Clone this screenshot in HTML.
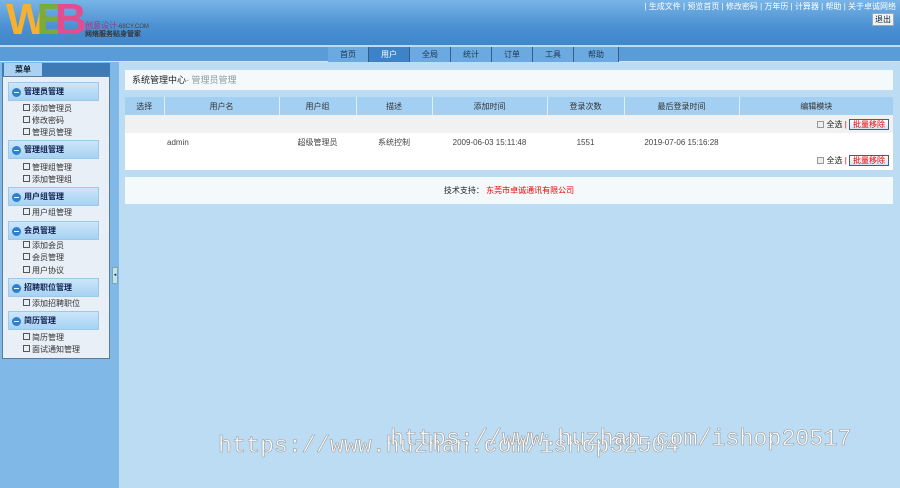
<!DOCTYPE html>
<html><head><meta charset="utf-8"><style>
*{margin:0;padding:0;box-sizing:border-box}
body{width:900px;height:488px;overflow:hidden;position:relative;background:#bcdcf4;font-family:"Liberation Sans","Noto Sans CJK SC",sans-serif;font-size:8px;color:#222}
.a{position:absolute}
#hd{left:0;top:0;width:900px;height:45px;background:linear-gradient(#78b4e6,#4a90d2 60%,#3f86cb)}
#line{left:0;top:45px;width:900px;height:2px;background:#b8dcf6}
#nav{left:0;top:47px;width:900px;height:15px;background:#5a9cd8;border-bottom:1px solid #c9e4f7}
.tab{position:absolute;top:47px;height:15px;width:41px;background:#6aaae0;border-right:1px solid #33608a;text-align:center;line-height:15px;color:#1d3550}
.tab.on{background:#3e82c8;color:#fff}
#top a{color:#fff;text-decoration:none}
#side{left:0;top:62px;width:119px;height:426px;background:#80b8e8}
#menu{left:2px;top:63px;width:108px;height:13px;background:#3e7ab6}
#menut{left:4px;top:63px;width:38px;height:13px;background:#a9d2f2;text-align:center;line-height:13px;font-weight:bold;color:#123}
#panel{left:2px;top:76px;width:108px;height:283px;background:#e8eff6;border:1px solid #5b7d9c}
.gh{position:absolute;left:5px;width:91px;height:19px;background:linear-gradient(#cce6fa,#a6d2f2);border:1px solid #9cc9ea;font-weight:bold;color:#102050;line-height:18px;padding-left:15px;font-size:8px}
.gh:before{content:"";position:absolute;left:3px;top:5px;width:9px;height:9px;border-radius:50%;background:#2d7fd0}
.gh:after{content:"";position:absolute;left:5px;top:9px;width:5px;height:1px;background:#fff}
.it{position:absolute;left:20px;color:#333;font-size:8px;line-height:10px}
.it:before{content:"";display:inline-block;width:5px;height:5px;border:1px solid #555;margin-right:2px;vertical-align:0}
.box{position:absolute;left:125px;width:768px;background:#f4f9fc}
table{border-collapse:collapse}
th{background:#a3cff2;font-weight:normal;height:18px;border-right:1px solid #e0f0fb;color:#333}
.btn{display:inline-block;border:1px solid #445d80;background:linear-gradient(#fff,#d6e3f2);color:#e00;padding:0 3px;line-height:9px;height:11px}
.cb{display:inline-block;width:7px;height:7px;border:1px solid #999;background:#eee;vertical-align:-1px}
.wm{position:absolute;font-family:"Liberation Mono",monospace;font-size:23.3px;color:#fff;-webkit-text-stroke:0.6px #999;white-space:nowrap;line-height:28px}
</style></head><body>
<div id="hd" class="a"></div>
<div class="a" style="left:6px;top:-3px;font-size:44px;font-weight:bold;letter-spacing:-11px;line-height:46px;font-family:'Liberation Sans',sans-serif"><span style="color:#f5b12f">W</span><span style="color:#7bab3a">E</span><span style="color:#e14d8e">B</span></div>
<div class="a" style="left:85px;top:20px;font-size:8px;color:#a8336e">创意设计<span style="color:#444;font-size:6px">-68CY.COM</span></div>
<div class="a" style="left:85px;top:29px;font-size:7px;color:#333;font-weight:bold">网络服务贴身管家</div>
<div id="top" class="a" style="right:4px;top:1px;color:#fff;font-size:8px;white-space:nowrap">| <a>生成文件</a> | <a>预览首页</a> | <a>修改密码</a> | <a>万年历</a> | <a>计算器</a> | <a>帮助</a> | <a>关于卓诚网络</a></div>
<div class="a" style="left:872px;top:13px;width:22px;height:13px;background:#eef4f6;border:1px solid #9ab;text-align:center;line-height:11px;color:#123">退出</div>
<div id="line" class="a"></div>
<div id="nav" class="a"></div>
<div class="tab" style="left:328px">首页</div><div class="tab on" style="left:369px">用户</div><div class="tab" style="left:410px">全局</div><div class="tab" style="left:451px">统计</div><div class="tab" style="left:492px">订单</div><div class="tab" style="left:533px">工具</div><div class="tab" style="left:574px;width:45px">帮助</div>
<div id="side" class="a"></div>
<div id="menu" class="a"></div><div id="menut" class="a">菜单</div>
<div id="panel" class="a">
<div class="gh" style="top:5px">管理员管理</div>
<div class="it" style="top:27px">添加管理员</div><div class="it" style="top:39px">修改密码</div><div class="it" style="top:51px">管理员管理</div>
<div class="gh" style="top:63px">管理组管理</div>
<div class="it" style="top:86px">管理组管理</div><div class="it" style="top:98px">添加管理组</div>
<div class="gh" style="top:110px">用户组管理</div>
<div class="it" style="top:131px">用户组管理</div>
<div class="gh" style="top:144px">会员管理</div>
<div class="it" style="top:164px">添加会员</div><div class="it" style="top:176px">会员管理</div><div class="it" style="top:189px">用户协议</div>
<div class="gh" style="top:201px">招聘职位管理</div>
<div class="it" style="top:222px">添加招聘职位</div>
<div class="gh" style="top:234px">简历管理</div>
<div class="it" style="top:256px">简历管理</div><div class="it" style="top:268px">面试通知管理</div>
</div>
<div class="a" style="left:112px;top:267px;width:6px;height:17px;background:#c6e0f0;border:1px solid #7aa;font-size:5px;line-height:15px;text-align:center">◂</div>
<div class="box" style="top:70px;height:20px;line-height:20px;padding-left:7px;font-size:9px"><span style="color:#222">系统管理中心</span><span style="color:#8a9a9a">- 管理员管理</span></div>
<div class="box" style="top:97px;height:73px;background:#fff">
<table style="width:768px;text-align:center">
<tr><th style="width:39px">选择</th><th style="width:115px">用户名</th><th style="width:77px">用户组</th><th style="width:76px">描述</th><th style="width:115px">添加时间</th><th style="width:77px">登录次数</th><th style="width:115px">最后登录时间</th><th style="border:0">编辑模块</th></tr>
<tr style="background:#f1f1f1;height:18px"><td colspan="8" style="text-align:right;padding-right:4px"><span class="cb"></span> 全选 <span style="color:#e00">|</span> <span class="btn">批量移除</span></td></tr>
<tr style="height:19px;color:#444"><td></td><td style="text-align:left;padding-left:3px">admin</td><td>超级管理员</td><td>系统控制</td><td>2009-06-03 15:11:48</td><td>1551</td><td>2019-07-06 15:16:28</td><td></td></tr>
<tr style="height:16px"><td colspan="8" style="text-align:right;padding-right:4px"><span class="cb"></span> 全选 <span style="color:#e00">|</span> <span class="btn">批量移除</span></td></tr>
</table></div>
<div class="box" style="top:177px;height:27px;line-height:27px;text-align:center;color:#222">技术支持： <span style="color:#e00">东莞市卓诚通讯有限公司</span></div>
<div class="wm" style="left:218px;top:432px">https://www.huzhan.com/ishop32504</div>
<div class="wm" style="left:390px;top:425px">https://www.huzhan.com/ishop20517</div>
</body></html>
